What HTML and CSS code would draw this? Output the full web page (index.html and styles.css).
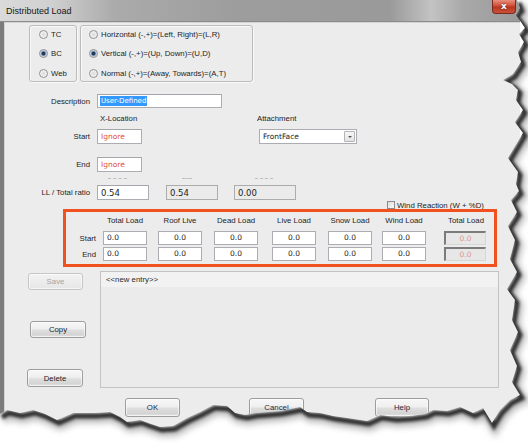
FILE: index.html
```html
<!DOCTYPE html>
<html>
<head>
<meta charset="utf-8">
<link rel="stylesheet" href="styles.css">
</head>
<body>
<div class="window">
  <div class="titlebar"><span class="title">Distributed Load</span><span class="close">x</span></div>
  <div class="client">
    <div class="radios">
      <div class="group g1">
        <div class="opt"><i class="rb"></i>TC</div>
        <div class="opt"><i class="rb on"></i>BC</div>
        <div class="opt"><i class="rb"></i>Web</div>
      </div>
      <div class="group g2">
        <div class="opt"><i class="rb"></i>Horizontal (-,+)=(Left, Right)=(L,R)</div>
        <div class="opt"><i class="rb on"></i>Vertical (-,+)=(Up, Down)=(U,D)</div>
        <div class="opt"><i class="rb"></i>Normal (-,+)=(Away, Towards)=(A,T)</div>
      </div>
    </div>

    <div class="row desc-row"><span class="lbl">Description</span><span class="field desc"><span class="selected">User-Defined</span></span></div>
    <div class="row head-row"><span class="lbl"></span><span class="h-x">X-Location</span><span class="h-a">Attachment</span></div>
    <div class="row start-row"><span class="lbl">Start</span><span class="field loc">Ignore</span><span class="combo"><span class="combo-text">FrontFace</span><span class="combo-btn"><i></i></span></span></div>
    <div class="row end-row"><span class="lbl">End</span><span class="field loc">Ignore</span></div>
    <div class="row dash-row"><span class="lbl"></span><span class="dash d1"></span><span class="dash d2"></span><span class="dash d3"></span></div>
    <div class="row ll-row"><span class="lbl">LL / Total ratio</span><span class="field ll">0.54</span><span class="field ll ro r2">0.54</span><span class="field ll ro r3">0.00</span></div>
    <div class="row wind-row"><span class="chk"></span><span class="wind-text">Wind Reaction (W + %D)</span></div>

    <div class="loads">
      <span></span>
      <span class="lh">Total Load</span>
      <span class="lh">Roof Live</span>
      <span class="lh">Dead Load</span>
      <span class="lh">Live Load</span>
      <span class="lh">Snow Load</span>
      <span class="lh">Wind Load</span>
      <span class="lh">Total Load</span>

      <span class="rl">Start</span>
      <span class="num first">0.0</span>
      <span class="num">0.0</span>
      <span class="num">0.0</span>
      <span class="num">0.0</span>
      <span class="num">0.0</span>
      <span class="num">0.0</span>
      <span class="num tot">0.0</span>

      <span class="rl">End</span>
      <span class="num first">0.0</span>
      <span class="num">0.0</span>
      <span class="num">0.0</span>
      <span class="num">0.0</span>
      <span class="num">0.0</span>
      <span class="num">0.0</span>
      <span class="num tot">0.0</span>
    </div>

    <div class="lower">
      <div class="side">
        <div class="btn save">Save</div>
        <div class="btn copy">Copy</div>
        <div class="btn del">Delete</div>
      </div>
      <div class="list"><div class="list-row">&lt;&lt;new entry&gt;&gt;</div></div>
    </div>

    <div class="actions">
      <div class="btn ok">OK</div>
      <div class="btn cancel">Cancel</div>
      <div class="btn help">Help</div>
    </div>
  </div>

  <svg class="torn" width="528" height="444" viewBox="0 0 528 444">
    <defs>
      <clipPath id="out">
        <path d="M517,0 L520,8 515,14 521,22 525,28 519,34 524,42 518,52 521,62 513,74 503,80 512,84 518,90 516,100 523,110 515,122 523,133 517,143 508,158 518,172 516,184 519,191 511,200 517,212 508,226 515,240 510,259 517,272 507,289 515,300 512,320 518,332 510,350 517,366 512,382 520,395 510,400 500,410 492,423 483,408 473,413 460,407 447,411 433,410 425,414 410,416 395,417 380,415 367,421 347,418 333,416 320,413 307,412 300,407 290,409 280,411 268,412 255,413 245,415 235,413 227,406 213,405 200,412 187,418 173,426 160,427 148,423 140,420 127,422 120,417 110,412 95,413 73,413 57,420 45,414 33,410 20,413 7,410 0,414 L0,444 L528,444 L528,0 Z"/>
      </clipPath>
      <filter id="blur" x="-10%" y="-10%" width="120%" height="120%"><feGaussianBlur stdDeviation="1.6"/></filter>
      <filter id="blur2" x="-10%" y="-10%" width="120%" height="120%"><feGaussianBlur stdDeviation="3"/></filter>
    </defs>
    <path fill="#ffffff" d="M517,0 L520,8 515,14 521,22 525,28 519,34 524,42 518,52 521,62 513,74 503,80 512,84 518,90 516,100 523,110 515,122 523,133 517,143 508,158 518,172 516,184 519,191 511,200 517,212 508,226 515,240 510,259 517,272 507,289 515,300 512,320 518,332 510,350 517,366 512,382 520,395 510,400 500,410 492,423 483,408 473,413 460,407 447,411 433,410 425,414 410,416 395,417 380,415 367,421 347,418 333,416 320,413 307,412 300,407 290,409 280,411 268,412 255,413 245,415 235,413 227,406 213,405 200,412 187,418 173,426 160,427 148,423 140,420 127,422 120,417 110,412 95,413 73,413 57,420 45,414 33,410 20,413 7,410 0,414 L0,444 L528,444 L528,0 Z"/>
    <g clip-path="url(#out)">
      <polyline fill="none" stroke="#777" stroke-width="10" opacity="0.5" filter="url(#blur2)" transform="translate(3,5)" points="517,0 520,8 515,14 521,22 525,28 519,34 524,42 518,52 521,62 513,74 503,80 512,84 518,90 516,100 523,110 515,122 523,133 517,143 508,158 518,172 516,184 519,191 511,200 517,212 508,226 515,240 510,259 517,272 507,289 515,300 512,320 518,332 510,350 517,366 512,382 520,395 510,400 500,410 492,423 483,408 473,413 460,407 447,411 433,410 425,414 410,416 395,417 380,415 367,421 347,418 333,416 320,413 307,412 300,407 290,409 280,411 268,412 255,413 245,415 235,413 227,406 213,405 200,412 187,418 173,426 160,427 148,423 140,420 127,422 120,417 110,412 95,413 73,413 57,420 45,414 33,410 20,413 7,410 0,414"/>
      <polyline fill="none" stroke="#2e2e2e" stroke-width="5" filter="url(#blur)" transform="translate(2,3)" points="517,0 520,8 515,14 521,22 525,28 519,34 524,42 518,52 521,62 513,74 503,80 512,84 518,90 516,100 523,110 515,122 523,133 517,143 508,158 518,172 516,184 519,191 511,200 517,212 508,226 515,240 510,259 517,272 507,289 515,300 512,320 518,332 510,350 517,366 512,382 520,395 510,400 500,410 492,423 483,408 473,413 460,407 447,411 433,410 425,414 410,416 395,417 380,415 367,421 347,418 333,416 320,413 307,412 300,407 290,409 280,411 268,412 255,413 245,415 235,413 227,406 213,405 200,412 187,418 173,426 160,427 148,423 140,420 127,422 120,417 110,412 95,413 73,413 57,420 45,414 33,410 20,413 7,410 0,414"/>
    </g>
  </svg>
</div>
</body>
</html>
```

FILE: styles.css
```css
body {
  margin: 0;
  background: #ffffff;
  font-family: "Liberation Sans", Arial, sans-serif;
  font-size: 7.8px;
  color: #1c1c1c;
}

.window {
  position: relative;
  width: 528px;
  height: 444px;
  overflow: hidden;
  background: #ffffff;
}

/* title bar */
.titlebar {
  width: 520px;
  height: 22px;
  box-sizing: border-box;
  display: flex;
  align-items: center;
  border-bottom: 1px solid #8c8c8c;
  background: linear-gradient(to right, #dadada 0%, #d0d0d0 10%, #ababab 22%, #9d9d9d 45%, #9a9a9a 75%, #c3c3c3 83%, #a9a9a9 89%, #999999 100%);
}
.title {
  margin-left: 6px;
  font-size: 9px;
  color: #161616;
}
.close {
  margin-left: auto;
  margin-right: 4px;
  align-self: flex-start;
  width: 24px;
  height: 14px;
  box-sizing: border-box;
  border: 1px solid #7d2a1e;
  border-top: none;
  border-radius: 0 0 4px 4px;
  background: linear-gradient(#e7907f, #cf4d36 45%, #b8361f 55%, #c9543a);
  color: #ffffff;
  font-family: "DejaVu Sans", sans-serif;
  font-weight: bold;
  font-size: 9px;
  line-height: 12px;
  text-align: center;
  text-shadow: 0 0 2px #5a1a10;
}

/* client area */
.client {
  width: 520px;
  height: 422px;
  box-sizing: border-box;
  display: flex;
  flex-direction: column;
  align-items: flex-start;
  background: #ececec;
  border-left: 4px solid #7c7c7c;
  box-shadow: inset 1px 1px 0 #d4d4d4;
}

.radios {
  display: flex;
  gap: 3px;
  margin-top: 3px;
  margin-left: 25px;
}
.group {
  box-sizing: border-box;
  height: 57px;
  border: 1px solid #bcbcbc;
  border-radius: 3px;
  box-shadow: inset 1px 1px 0 #f8f8f8, 1px 1px 0 #f8f8f8;
  display: flex;
  flex-direction: column;
  gap: 3.5px;
}
.g1 { width: 48px; }
.g2 { width: 173px; }
.opt {
  height: 16px;
  display: flex;
  align-items: center;
  white-space: nowrap;
  color: #1e1e1e;
}
.g1 .opt { padding-left: 9px; }
.g2 .opt { padding-left: 8px; }
.rb {
  display: block;
  width: 9px;
  height: 9px;
  box-sizing: border-box;
  border: 1px solid #8f9090;
  border-radius: 50%;
  margin-right: 3px;
  background: radial-gradient(circle at 50% 50%, #d9d9d9 0, #f4f4f4 70%);
}
.rb.on {
  background: radial-gradient(circle at 50% 50%, #23324d 0, #2b3e5e 1.5px, #86a3c4 2.3px, #e7eef6 3.5px);
}

/* form rows */
.row {
  display: flex;
  align-items: center;
}
.lbl {
  width: 86px;
  margin-right: 7px;
  text-align: right;
  white-space: nowrap;
}
.field {
  box-sizing: border-box;
  height: 15px;
  display: flex;
  align-items: center;
  padding-left: 3px;
  background: #ffffff;
  border: 1px solid #abadb3;
  border-top-color: #a3a5ab;
  font-family: "DejaVu Sans", sans-serif;
  font-size: 7.5px;
  white-space: nowrap;
}

.desc-row { margin-top: 12px; height: 14px; }
.desc { width: 125px; height: 14px; padding-left: 2px; }
.selected {
  background: #3399ff;
  color: #ffffff;
  font-size: 7px;
  line-height: 10px;
  padding: 0 1px;
}

.head-row { margin-top: 4px; height: 12px; }
.h-x { width: 160px; box-sizing: border-box; padding-left: 3px; }

.start-row { margin-top: 5px; height: 15px; }
.end-row { margin-top: 13px; height: 15px; }
.loc { width: 45px; color: #e0513a; }

.combo {
  box-sizing: border-box;
  margin-left: 117px;
  width: 98px;
  height: 15px;
  display: flex;
  align-items: center;
  background: #ffffff;
  border: 1px solid #abadb3;
  font-family: "DejaVu Sans", sans-serif;
  font-size: 7.5px;
}
.combo-text { padding-left: 3px; }
.combo-btn {
  margin-left: auto;
  margin-right: 1px;
  width: 11px;
  height: 11px;
  box-sizing: border-box;
  border: 1px solid #b4b4b4;
  border-radius: 1px;
  background: linear-gradient(#f7f7f7, #e3e3e3);
  display: flex;
  align-items: center;
  justify-content: center;
}
.combo-btn i {
  display: block;
  width: 0;
  height: 0;
  border-left: 2px solid transparent;
  border-right: 2px solid transparent;
  border-top: 2px solid #555;
}

.dash-row { margin-top: 4px; height: 4px; }
.dash { height: 0; border-top: 1px dashed #bdbdbd; }
.d1 { margin-left: 11px; width: 19px; }
.d2 { margin-left: 55px; width: 10px; }
.d3 { margin-left: 63px; width: 18px; }

.ll-row { margin-top: 5px; height: 15px; }
.ll { width: 52px; font-size: 8.5px; }
.ll.ro { background: #ebebeb; border-color: #acacac; }
.r2 { margin-left: 17px; }
.r3 { margin-left: 16px; width: 62px; }

.wind-row { margin-top: 1px; height: 8px; }
.chk {
  margin-left: 383px;
  width: 8px;
  height: 8px;
  box-sizing: border-box;
  border: 1px solid #8b8b8b;
  background: linear-gradient(135deg, #dcdcdc, #fbfbfb);
}
.wind-text { margin-left: 2px; white-space: nowrap; }

/* loads table */
.loads {
  margin-left: 59px;
  width: 434px;
  height: 58px;
  box-sizing: border-box;
  border: 3px solid #f1501f;
  display: grid;
  grid-template-columns: 37px 55px 56px 58px 56px 54px 62px 44px;
  grid-template-rows: 17px 14px 14px;
  row-gap: 2px;
}
.lh {
  width: 44px;
  text-align: center;
  white-space: nowrap;
  align-self: center;
}
.rl {
  text-align: right;
  padding-right: 7px;
  align-self: center;
}
.num {
  box-sizing: border-box;
  width: 44px;
  height: 14px;
  background: #ffffff;
  border: 1px solid #abadb3;
  font-family: "DejaVu Sans", sans-serif;
  font-size: 7.5px;
  line-height: 12px;
  text-align: center;
}
.num.first { text-align: left; padding-left: 3px; }
.num.tot {
  width: 42px;
  background: #e7e7e7;
  border-width: 2px 1px 1px 2px;
  border-style: solid;
  border-color: #7b7b7b #d6d6d6 #d6d6d6 #7b7b7b;
  color: #e39393;
  line-height: 11px;
}

/* lower section */
.lower {
  margin-top: 4px;
  display: flex;
}
.side {
  width: 96px;
  display: flex;
  flex-direction: column;
  align-items: flex-start;
}
.btn {
  box-sizing: border-box;
  height: 17px;
  display: flex;
  align-items: center;
  justify-content: center;
  border: 1px solid #9d9d9d;
  border-radius: 3px;
  background: linear-gradient(#f7f7f7, #efefef 45%, #dedede 55%, #d4d4d4 85%, #e4e4e4);
  box-shadow: inset 0 0 0 1px rgba(255, 255, 255, 0.6);
  color: #1e1e1e;
  white-space: nowrap;
}
.save {
  margin-left: 24px;
  margin-top: 2px;
  width: 55px;
  border-color: #c6c6c6;
  background: linear-gradient(#f3f3f3, #e6e6e6);
  color: #a3a3a3;
}
.copy { margin-left: 26px; margin-top: 31px; width: 56px; }
.del { margin-left: 23px; margin-top: 31px; width: 56px; height: 18px; }

.list {
  width: 399px;
  height: 117px;
  box-sizing: border-box;
  border: 1px solid #c3c3c3;
  background: #ebebeb;
}
.list-row {
  height: 15px;
  line-height: 15px;
  padding-left: 5px;
  background: #f2f2f2;
  color: #2a2a2a;
}

.actions {
  margin-top: 10px;
  display: flex;
}
.actions .btn { height: 19px; color: #1d2a44; }
.ok { margin-left: 121px; width: 55px; }
.cancel { margin-left: 69px; width: 55px; }
.help { margin-left: 71px; width: 54px; }

/* torn paper edge over the screenshot */
.torn {
  position: absolute;
  left: 0;
  top: 0;
}
```
